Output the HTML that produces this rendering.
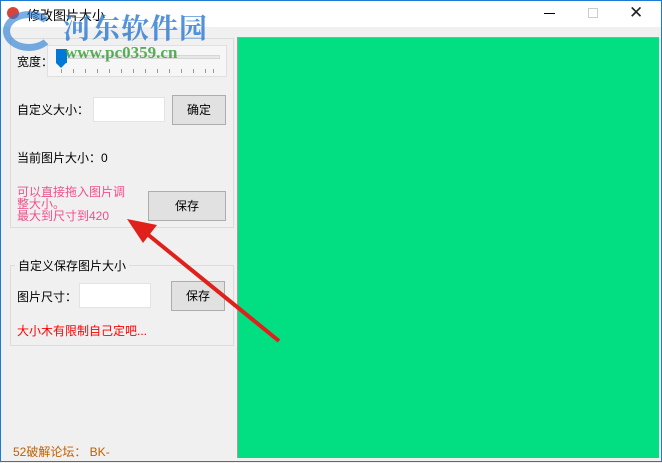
<!DOCTYPE html><html><head><meta charset="utf-8"><style>
*{margin:0;padding:0;box-sizing:border-box}
body{width:662px;height:462px;overflow:hidden;background:#f0f0f0;font-family:"Liberation Sans","Noto Sans CJK SC",sans-serif;font-size:12px;position:relative;border:1px solid #1a7ad4}
.a{position:absolute}
.btn{position:absolute;background:#e1e1e1;border:1px solid #adadad;text-align:center;font-size:12px;color:#000}
.inp{position:absolute;background:#fff;border:1px solid #7a7a7a}
.gb{position:absolute;border:1px solid #dcdcdc}
.tk{position:absolute;top:68px;width:1px;height:4px;background:#999}
</style></head><body>
<div class="a" style="left:0;top:0;width:660px;height:26px;background:#fff"></div>
<div class="a" style="left:6px;top:6px;width:12px;height:12px;border-radius:50%;background:#d9443a"></div>
<div class="a" style="left:26px;top:4px;font-size:13px">修改图片大小</div>
<div class="a" style="left:543px;top:12px;width:11px;height:1px;background:#000"></div>
<div class="a" style="left:587px;top:7px;width:10px;height:10px;border:1px solid #ccc"></div>
<div class="a" style="left:628px;top:2px;font-size:17px;color:#222">✕</div>
<!-- group 1 -->
<div class="gb" style="left:9px;top:37px;width:224px;height:190px"></div>
<div class="a" style="left:46px;top:44px;width:180px;height:32px;border:1px solid #e0e0e0;background:#f6f6f6"></div>
<div class="a" style="left:57px;top:54px;width:162px;height:4px;background:#e7e7e7;border:1px solid #d6d6d6"></div>
<div class="tk" style="left:60px"></div><div class="tk" style="left:72px"></div><div class="tk" style="left:84px"></div><div class="tk" style="left:96px"></div><div class="tk" style="left:108px"></div><div class="tk" style="left:120px"></div><div class="tk" style="left:132px"></div><div class="tk" style="left:144px"></div><div class="tk" style="left:156px"></div><div class="tk" style="left:168px"></div><div class="tk" style="left:180px"></div><div class="tk" style="left:192px"></div><div class="tk" style="left:204px"></div><div class="tk" style="left:212px"></div>
<div class="a" style="left:55px;top:48px;width:11px;height:14px;background:#0078d7"></div>
<div class="a" style="left:55px;top:62px;width:0;height:0;border-left:5.5px solid transparent;border-right:5.5px solid transparent;border-top:5px solid #0078d7"></div>
<div class="a" style="left:16px;top:52px">宽度：</div>
<div class="a" style="left:16px;top:100px">自定义大小：</div>
<div class="inp" style="left:92px;top:96px;width:72px;height:25px;border-color:#e3e3e3"></div>
<div class="btn" style="left:171px;top:94px;width:54px;height:30px;line-height:28px">确定</div>
<div class="a" style="left:16px;top:148px">当前图片大小：0</div>
<div class="a" style="left:16px;top:185px;color:#f0508a;line-height:12px;width:115px">可以直接拖入图片调整大小。<br>最大到尺寸到420</div>
<div class="btn" style="left:147px;top:190px;width:78px;height:30px;line-height:28px">保存</div>
<!-- group 2 -->
<div class="gb" style="left:9px;top:264px;width:224px;height:81px"></div>
<div class="a" style="left:14px;top:256px;background:#f0f0f0;padding:0 3px">自定义保存图片大小</div>
<div class="a" style="left:16px;top:287px">图片尺寸：</div>
<div class="inp" style="left:78px;top:282px;width:72px;height:25px;border-color:#e3e3e3"></div>
<div class="btn" style="left:170px;top:280px;width:54px;height:30px;line-height:28px">保存</div>
<div class="a" style="left:16px;top:321px;color:#f00">大小木有限制自己定吧...</div>
<div class="a" style="left:12px;top:442px;color:#c06000">52破解论坛：  BK-</div>
<!-- green -->
<div class="a" style="left:236px;top:36px;width:422px;height:421px;background:#02df82;border-left:1px solid #a0a0a0;border-top:1px solid #a0a0a0"></div>
<!-- watermark -->
<div class="a" style="left:2px;top:10px;width:52px;height:40px;border-radius:50%;border:7px solid rgba(30,120,210,.6);border-right-color:transparent"></div>
<div class="a" style="left:62px;top:6px;font-size:28px;font-weight:bold;color:rgba(40,120,210,.8);letter-spacing:1px;font-family:'Noto Serif CJK SC',serif">河东软件园</div>
<div class="a" style="left:64px;top:42px;font-size:17px;font-weight:bold;color:rgba(60,160,60,.85);font-family:'Liberation Serif',serif">www.pc0359.cn</div>
<svg class="a" style="left:0;top:0" width="662" height="462"><line x1="278" y1="340" x2="145" y2="232" stroke="#e0201a" stroke-width="4"/><polygon points="126,218 156,224 142,242" fill="#e0201a"/></svg>
</body></html>
